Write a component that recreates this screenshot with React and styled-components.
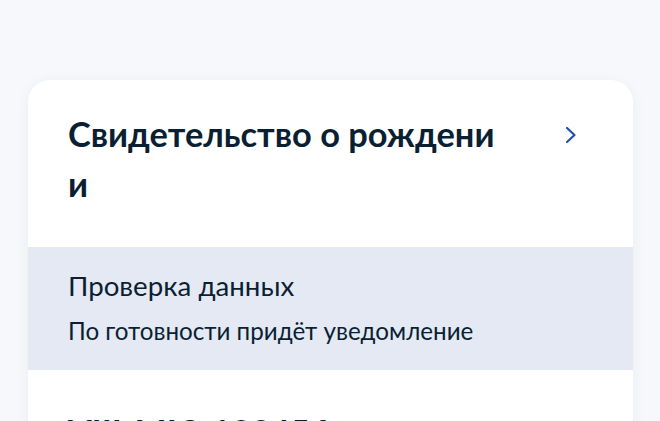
import React from "react";
import styled, { createGlobalStyle } from "styled-components";

const Global = createGlobalStyle`
  html, body { margin: 0; padding: 0; background: #f6f8fb; }
  body { font-family: Lato, "Noto Sans", sans-serif; color: #0b1f33; }
`;

const Page = styled.div`
  padding: 80px 27px 0 28px;
  box-sizing: border-box;
  overflow: hidden;
  height: 421px;
`;

const Card = styled.div`
  background: #fff;
  border-radius: 22px;
  overflow: hidden;
  box-shadow: 0 2px 14px rgba(11, 31, 51, 0.05);
`;

const Header = styled.div`
  display: flex;
  align-items: flex-start;
  padding: 29px 56px 38px 40px;
  gap: 61px;
`;

const Title = styled.h2`
  flex: 1;
  margin: 0;
  font-size: 34.4px;
  line-height: 50px;
  font-weight: 700;
  word-break: break-all;
  color: #0b1f33;
`;

const Chevron = styled.svg`
  flex: 0 0 12px;
  width: 12px;
  height: 18px;
  margin-top: 17px;
`;

const Status = styled.div`
  background: #e4e9f3;
  padding: 21px 40px 23px;
`;

const StatusTitle = styled.div`
  font-size: 27.7px;
  line-height: 36px;
  color: #0b1f33;
`;

const StatusNote = styled.div`
  margin-top: 11px;
  font-size: 24.2px;
  line-height: 32px;
  color: #0b1f33;
`;

const Number = styled.div`
  padding: 37px 40px 20px;
  font-size: 34px;
  line-height: 50px;
  font-weight: 700;
`;

export default function App() {
  return (
    <>
      <Global />
      <Page>
        <Card>
          <Header>
            <Title>Свидетельство о рождении</Title>
            <Chevron viewBox="0 0 12 18" fill="none">
              <path d="M2 2l7.5 7-7.5 7" stroke="#2151a8" strokeWidth="2.2" strokeLinecap="round" strokeLinejoin="round" />
            </Chevron>
          </Header>
          <Status>
            <StatusTitle>Проверка данных</StatusTitle>
            <StatusNote>По готовности придёт уведомление</StatusNote>
          </Status>
          <Number>VIII-МЮ 123456</Number>
        </Card>
      </Page>
    </>
  );
}
